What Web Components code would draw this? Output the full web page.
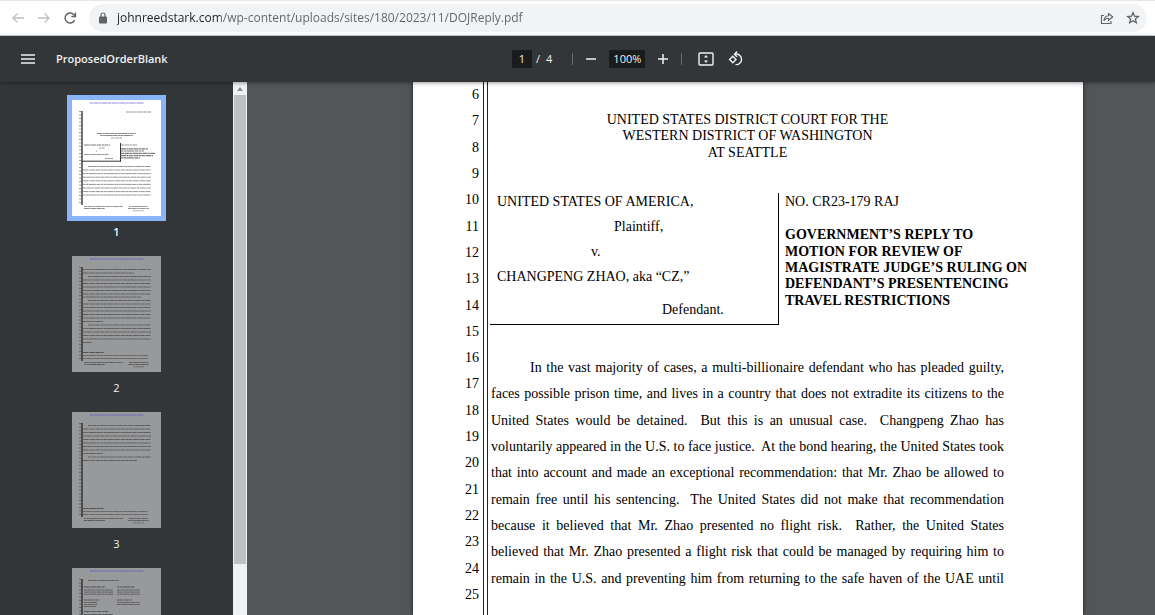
<!DOCTYPE html>
<html lang="en">
<head>
<meta charset="utf-8">
<title>ProposedOrderBlank</title>
<style>
  html, body { height: 100%; margin: 0; }
  body { font-family: "Open Sans", "Noto Sans", sans-serif; overflow: hidden; }
</style>
</head>
<body>
<pdf-window></pdf-window>

<template id="t-window">
  <style>
    :host { display: flex; flex-direction: column; height: 100vh; background: #525659; }
    .viewer { flex: 1; min-height: 0; display: grid; grid-template-columns: 247px minmax(0, 1fr); }
  </style>
  <browser-bar></browser-bar>
  <viewer-toolbar></viewer-toolbar>
  <div class="viewer">
    <thumbnail-pane></thumbnail-pane>
    <page-view></page-view>
  </div>
</template>

<template id="t-browser">
  <style>
    :host { display: flex; align-items: center; box-sizing: border-box; height: 36px; flex: none;
      padding: 0 8px 0 5px; background: #fff; border-top: 1px solid #e4e6e9; border-bottom: 1px solid #d5d7da; }
    button { all: unset; display: grid; place-items: center; width: 26px; height: 28px; color: #5f6368; }
    button.off { color: #bcbec1; }
    svg { display: block; fill: none; stroke: currentColor; }
    form { flex: 1; min-width: 0; display: flex; align-items: center; height: 28px; margin: 0 0 0 6px;
      padding: 0 1px 0 8px; border-radius: 14px; background: #f1f3f4; }
    .lock { color: #5f6368; margin-right: 8px; }
    input { flex: 1; min-width: 0; border: 0; padding: 0; outline: 0; font: 12px/18px "Open Sans", "Noto Sans", sans-serif;
      color: #5f6368; background: linear-gradient(90deg, #202124 103px, #5f6368 103px);
      -webkit-background-clip: text; background-clip: text; -webkit-text-fill-color: transparent; }
  </style>
  <button type="button" class="off" aria-label="Back"><svg width="14" height="14" viewBox="0 0 14 14" stroke-width="1.3"><path d="M13 7H2M6.5 2.5 2 7l4.500 4.500"/></svg></button>
  <button type="button" class="off" aria-label="Forward"><svg width="14" height="14" viewBox="0 0 14 14" stroke-width="1.300"><path d="M1 7h11M7.500 2.500 12 7l-4.500 4.500"/></svg></button>
  <button type="button" aria-label="Reload"><svg width="14" height="14" viewBox="0 0 14 14" stroke-width="1.500"><path d="M11.600 9.100A5 5 0 1 1 10.800 3.700L12 5"/><path d="M12.400 1.500v4H8.400" /></svg></button>
  <form>
    <svg class="lock" width="12" height="14" viewBox="0 0 12 14"><rect x="2" y="5.500" width="8" height="7" rx="1" fill="currentColor" stroke="none"/><path d="M4 6V4a2 2 0 0 1 4 0v2" stroke-width="1.200"/></svg>
    <input type="text" aria-label="Address" value="johnreedstark.com/wp-content/uploads/sites/180/2023/11/DOJReply.pdf" spellcheck="false">
    <button type="button" aria-label="Share"><svg width="14" height="14" viewBox="0 0 14 14" stroke-width="1.100"><path d="M4 4.500H1.500v8h9.500V10"/><path d="M4 9.500C4.300 6.500 6 5 8.500 4.800V2.500L12.800 6 8.500 9.300V7.200C6.500 7.200 5 8 4 9.500z" stroke-linejoin="round"/></svg></button>
    <button type="button" aria-label="Bookmark"><svg width="14" height="14" viewBox="0 0 14 14" stroke-width="1.300"><path d="m7 1.700 1.500 3.500 3.800.3-2.900 2.500.9 3.700L7 9.700l-3.300 2 .9-3.700L1.700 5.500l3.800-.3z"/></svg></button>
  </form>
</template>

<template id="t-toolbar">
  <style>
    :host { display: grid; grid-template-columns: 512px auto 1fr; align-items: center; height: 46px; flex: none;
      background: #323639; color: #f1f1f1; box-shadow: 0 1px 4px rgba(0, 0, 0, .4); position: relative; z-index: 1; }
    .title, .tools { display: flex; align-items: center; }
    .title { padding-left: 20px; }
    h1 { margin: 0 0 0 20px; font-size: 11px; line-height: 18px; font-weight: 600; }
    button { all: unset; display: grid; place-items: center; width: 16px; height: 16px; }
    svg { display: block; fill: none; stroke: currentColor; }
    input, .count { font: 11px/18px "Open Sans", "Noto Sans", sans-serif; color: #f1f1f1; }
    input { box-sizing: border-box; height: 18px; width: 20px; padding: 0; border: 0; text-align: center; background: #191b1c; }
    input.zoom { width: 36px; margin: 0 10px; }
    .count { display: flex; gap: 6px; margin-left: 4px; }
    i { width: 1px; height: 12px; background: #6b6e70; }
    i.a { margin: 0 10px 0 20px; }
    i.b { margin: 0 16px 0 10px; }
    .rotate { margin-left: 14px; }
  </style>
  <div class="title">
    <button type="button" aria-label="Menu"><svg width="14" height="12" viewBox="0 0 14 12" stroke-width="1.700"><path d="M0 2h14M0 6h14M0 10h14"/></svg></button>
    <h1>ProposedOrderBlank</h1>
  </div>
  <div class="tools">
    <input type="text" aria-label="Page number" value="1"><span class="count"><span>/</span><span>4</span></span>
    <i class="a"></i>
    <button type="button" aria-label="Zoom out"><svg width="12" height="12" viewBox="0 0 12 12" stroke-width="1.500"><path d="M1 6h10"/></svg></button>
    <input class="zoom" type="text" aria-label="Zoom level" value="100%">
    <button type="button" aria-label="Zoom in"><svg width="12" height="12" viewBox="0 0 12 12" stroke-width="1.500"><path d="M1 6h10M6 1v10"/></svg></button>
    <i class="b"></i>
    <button type="button" aria-label="Fit to page"><svg width="16" height="14" viewBox="0 0 16 14"><rect x="1" y="1" width="14" height="12" rx="1" stroke-width="1.400"/><path d="M8 3 10 5.600H6zM8 11 10 8.400H6z" fill="currentColor" stroke="none"/></svg></button>
    <button type="button" class="rotate" aria-label="Rotate"><svg width="16" height="16" viewBox="0 0 16 16" stroke-width="1.400"><path d="M4.800 5.300 8 8.500 4.800 11.700 1.600 8.500z"/><path d="M7 3.200a5.300 5.300 0 1 1 .5 10.400"/><path d="M9 .6 6.500 3.200 9 5.700"/></svg></button>
  </div>
</template>

<template id="t-pane">
  <style>
    :host { display: grid; grid-template-columns: 1fr 14px; min-height: 0; overflow: hidden; background: #323639; }
    nav { display: flex; flex-direction: column; align-items: center; gap: 16px; padding-top: 18px; min-height: 0; overflow: hidden; }
    .bar { display: flex; flex-direction: column; background: #f1f1f1; min-height: 0; padding: 0 1px; }
    .bar svg { display: block; flex: none; }
    .bar div { height: 88%; background: #c1c1c1; }
  </style>
  <nav aria-label="Pages">
    <page-thumb number="1" current></page-thumb>
    <page-thumb number="2"></page-thumb>
    <page-thumb number="3"></page-thumb>
    <page-thumb number="4" bare></page-thumb>
  </nav>
  <div class="bar"><svg width="12" height="13" viewBox="0 0 12 13"><path d="M6 5 9 9H3z" fill="#8b8b8b"/></svg><div></div></div>
</template>

<template id="t-thumb">
  <style>
    :host { display: block; flex: none; }
    a { display: block; color: #f1f1f1; text-decoration: none; font-size: 11px; line-height: 16px; text-align: center; }
    .sheet { display: block; width: 89px; height: 116px; background: #98999b; margin-bottom: 8px; }
    :host([current]) .sheet { background: #fff; outline: 5px solid #8ab4f8; }
    :host([current]) a { font-weight: 600; }
    svg { display: block; }
  </style>
  <a><span class="sheet"></span><span class="no"></span></a>
</template>

<template id="t-page">
  <style>
    :host { display: flex; min-width: 0; min-height: 0; overflow: hidden; padding: 0 72px 0 166px;
      font-family: "Liberation Serif", "Times New Roman", serif; font-size: 14px; line-height: 16px; color: #000; }
    article { flex: 1; min-width: 0; display: grid; grid-template-columns: 66px 5px minmax(0, 1fr); column-gap: 4px;
      background: #fff; box-shadow: 0 0 4px rgba(0, 0, 0, .6); }
    ol { list-style: none; margin: 0; padding: 0; height: 526px; display: grid; grid-auto-rows: 1fr; align-items: center; text-align: right; }
    .rule { border: solid #222; border-width: 0 1px; }
    .body { padding: 30px 79px 0 0; margin-left: -1px; }
    .lines { display: grid; grid-auto-rows: 1fr; align-items: center; white-space: nowrap; margin: 0; font-size: inherit; font-weight: inherit; }
    .court { height: 49px; text-align: center; }
    .caption { display: grid; grid-template-columns: 289px 1fr; margin-top: 32px; height: 132px; margin-left: -1px; }
    .parties { border: solid #000; border-width: 0 1px 1px 0; display: flex; flex-direction: column; gap: 9px; padding-left: 7px; white-space: nowrap; }
    .parties p, .matter p { margin: 0; }
    .parties, .matter { padding-top: 1px; }
    .parties .role { padding-left: 117px; }
    .parties .v { padding-left: 94px; }
    .parties .last { padding: 8px 0 0 165px; }
    .matter { padding-left: 6px; }
    .matter h2 { margin-top: 17px; height: 82px; font-weight: 700; }
    .text { height: 237px; margin-top: 30px; }
    .text span { text-align: justify; text-align-last: justify; }
    .text span:first-child { padding-left: 39px; }
  </style>
  <article>
    <ol></ol>
    <div class="rule"></div>
    <div class="body">
      <h1 class="lines court"><span>UNITED STATES DISTRICT COURT FOR THE</span><span>WESTERN DISTRICT OF WASHINGTON</span><span>AT SEATTLE</span></h1>
      <section class="caption">
        <div class="parties">
          <p>UNITED STATES OF AMERICA,</p>
          <p class="role">Plaintiff,</p>
          <p class="v">v.</p>
          <p>CHANGPENG ZHAO, aka “CZ,”</p>
          <p class="last">Defendant.</p>
        </div>
        <div class="matter">
          <p>NO. CR23-179 RAJ</p>
          <h2 class="lines"><span>GOVERNMENT’S REPLY TO</span><span>MOTION FOR REVIEW OF</span><span>MAGISTRATE JUDGE’S RULING ON</span><span>DEFENDANT’S PRESENTENCING</span><span>TRAVEL RESTRICTIONS</span></h2>
        </div>
      </section>
      <p class="lines text"><span>In the vast majority of cases, a multi-billionaire defendant who has pleaded guilty,</span>
        <span>faces possible prison time, and lives in a country that does not extradite its citizens to the</span>
        <span>United States would be detained.&nbsp; But this is an unusual case.&nbsp; Changpeng Zhao has</span>
        <span>voluntarily appeared in the U.S. to face justice.&nbsp; At the bond hearing, the United States took</span>
        <span>that into account and made an exceptional recommendation: that Mr. Zhao be allowed to</span>
        <span>remain free until his sentencing.&nbsp; The United States did not make that recommendation</span>
        <span>because it believed that Mr. Zhao presented no flight risk.&nbsp; Rather, the United States</span>
        <span>believed that Mr. Zhao presented a flight risk that could be managed by requiring him to</span>
        <span>remain in the U.S. and preventing him from returning to the safe haven of the UAE until</span></p>
    </div>
  </article>
</template>

<script>
  const fill = (host, id) => {
    const root = host.attachShadow({ mode: 'open' });
    root.append(document.getElementById(id).content.cloneNode(true));
    return root;
  };

  // A run of miniature text: [x1, x2, y, weight]
  const many = (x1, x2, y, step, n) => Array.from({ length: n }, (_, i) => [x1, x2, y + i * step, .8]);
  const footer = [...many(12, 51, 106.5, 2, 1), [12, 33, 108.5, .9], [57, 76, 106.5, .8], [56, 77, 108.5, .8], [61, 72, 110.8, .6]];
  const MINI = {
    1: { rule: [11, 105], runs: [[54, 79, 12, .8], [25, 64, 33.5, .9], [28, 61, 35.5, .9], [39, 50, 38, .7],
        [12, 38, 45, 1], [27, 33, 48, .8], [24, 25, 51, .7], [12, 37, 54.500, .8], [33, 41, 58.500, .8],
        [49, 65, 45, .8], [49, 76, 48.800, 1.2], [49, 72, 51, 1.2], [49, 83, 53.300, 1.2], [49, 81, 55.600, 1.2], [49, 68, 57.800, 1.2],
        [16, 79, 66.500, .8], ...many(11, 79, 70, 3.6, 7), [11, 79, 95, .8], ...footer] },
    2: { rule: [11, 105], runs: [[11, 79, 13.5, .8], [11, 62, 17, .8], [16, 79, 20.5, .8], ...many(11, 79, 24, 3.5, 5), [11, 69, 41, .8],
        [16, 79, 44.500, .8], ...many(11, 79, 48, 3.5, 5), [11, 31, 65.500, .8], [16, 79, 69, .8], ...many(11, 79, 72.500, 3.5, 4),
        [11, 20, 86.500, .8], [11, 32, 96.500, 1.1], [11, 76, 99.500, .7], [11, 76, 102.500, .7], ...footer] },
    3: { rule: [11, 105], runs: [[16, 79, 13.5, .8], ...many(11, 79, 17, 3.5, 7), [11, 31, 41.500, .8], [16, 79, 45, .8], [11, 65, 48.500, .8],
        [11, 32, 96.500, 1.1], [11, 76, 99.500, .7], [11, 76, 102.500, .7], ...footer] },
    4: { rule: [11, 105], runs: [[16, 47, 12.5, .8], [12, 33, 19, 1], [45, 63, 19, 1], ...many(12, 41, 22, 2.1, 3), ...many(45, 68, 22, 2.1, 3),
        [12, 27, 32, .9], [45, 60, 32, .9], ...many(12, 25, 34.500, 2, 3), ...many(45, 68, 34.500, 2, 2), [12, 37, 43.500, .9], [12, 41, 46.500, .9]] },
  };
  const DASH = ['3 .5 5 .4 2 .5 6 .5', '5 .5 2 .4 4 .6', '2 .5 3 .4 7 .5 4 .5'];

  customElements.define('page-thumb', class extends HTMLElement {
    connectedCallback() {
      const root = fill(this, 't-thumb');
      const n = this.getAttribute('number');
      const { rule, runs } = MINI[n];
      const lines = runs.map(([a, b, y, w], i) =>
        `<path d="M${a} ${y}H${b}" stroke-width="${w}" stroke-dasharray="${DASH[i % 3]}"/>`).join('');
      const box = n === '1' ? '<path d="M48.500 43v18.500M10 61.200h39" stroke="#222" stroke-width=".9"/>' : '';
      const link = root.querySelector('a');
      link.href = '#page' + n;
      link.setAttribute('aria-label', 'Page ' + n);
      if (!this.hasAttribute('bare')) root.querySelector('.no').textContent = n;
      root.querySelector('.sheet').innerHTML =
        `<svg width="89" height="116" viewBox="0 0 89 116" fill="none" stroke="#222" stroke-opacity=".6">${lines}
          <g stroke-opacity="1"><path d="M18 3H72" stroke="#4a4ac8" stroke-opacity=".7" stroke-width=".9" stroke-dasharray="${DASH[0]}"/>${box}
          <path d="M10 ${rule[0]}V${rule[1]}" stroke-width="1.300"/>
          <path d="M8 ${rule[0]}V${rule[1]}" stroke-width="1.200" stroke-dasharray="1 2.500" stroke-opacity=".7"/></g></svg>`;
    }
  });
  customElements.define('browser-bar', class extends HTMLElement {
    connectedCallback() { fill(this, 't-browser'); }
  });
  customElements.define('viewer-toolbar', class extends HTMLElement {
    connectedCallback() { fill(this, 't-toolbar'); }
  });
  customElements.define('thumbnail-pane', class extends HTMLElement {
    connectedCallback() { fill(this, 't-pane'); }
  });
  customElements.define('page-view', class extends HTMLElement {
    connectedCallback() {
      const list = fill(this, 't-page').querySelector('ol');
      for (let n = 6; n <= 25; n++) {
        const li = document.createElement('li');
        li.textContent = n;
        list.append(li);
      }
    }
  });
  customElements.define('pdf-window', class extends HTMLElement {
    connectedCallback() { fill(this, 't-window'); }
  });
</script>
</body>
</html>
